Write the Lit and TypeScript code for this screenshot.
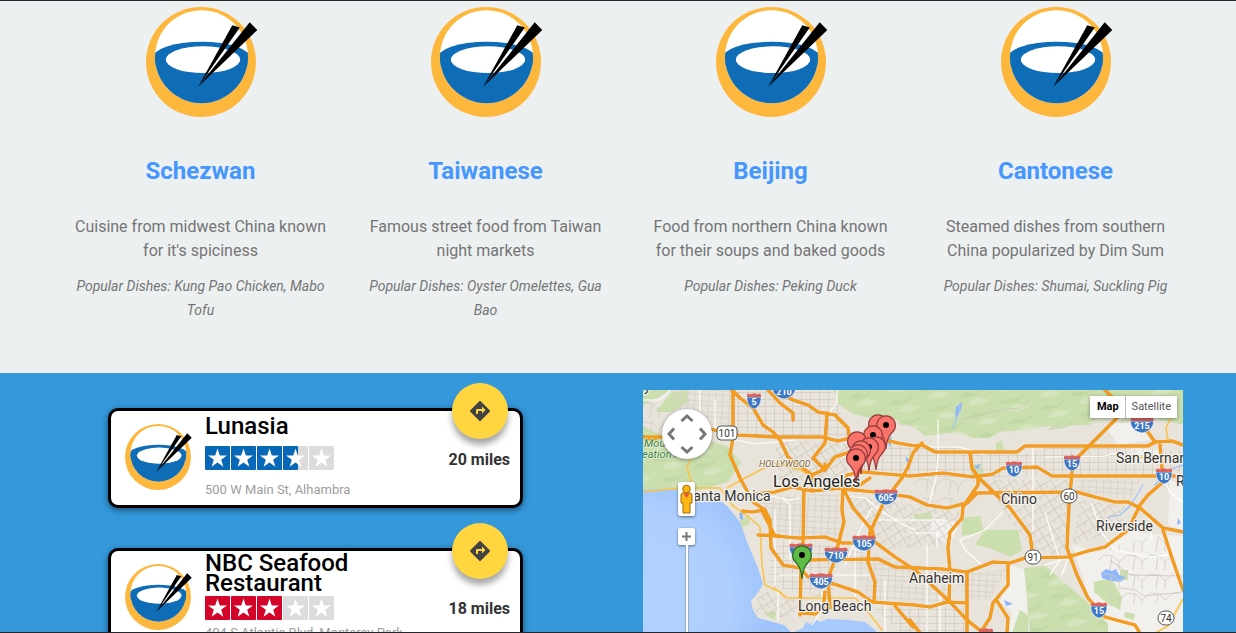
import { LitElement, html, svg, css } from "lit";
import { customElement, property } from "lit/decorators.js";

interface Cuisine {
  name: string;
  text: string;
  dishes: string;
}

interface Restaurant {
  name: string;
  rating: number;
  tone: "blue" | "red";
  address: string;
  miles: number;
}

const CUISINES: Cuisine[] = [
  { name: "Schezwan", text: "Cuisine from midwest China known for it's spiciness", dishes: "Kung Pao Chicken, Mabo Tofu" },
  { name: "Taiwanese", text: "Famous street food from Taiwan night markets", dishes: "Oyster Omelettes, Gua Bao" },
  { name: "Beijing", text: "Food from northern China known for their soups and baked goods", dishes: "Peking Duck" },
  { name: "Cantonese", text: "Steamed dishes from southern China popularized by Dim Sum", dishes: "Shumai, Suckling Pig" },
];

const RESTAURANTS: Restaurant[] = [
  { name: "Lunasia", rating: 3.5, tone: "blue", address: "500 W Main St, Alhambra", miles: 20 },
  { name: "NBC Seafood Restaurant", rating: 3, tone: "red", address: "404 S Atlantic Blvd, Monterey Park", miles: 18 },
];

@customElement("bowl-logo")
export class BowlLogo extends LitElement {
  static styles = css`
    :host { display: block; }
    svg { display: block; width: 100%; height: 100%; overflow: visible; }
  `;
  render() {
    return html`<svg viewBox="0 0 110 110" aria-hidden="true">
      <defs><clipPath id="inner"><circle cx="55.5" cy="49.7" r="46.5" /></clipPath></defs>
      <circle cx="55" cy="55" r="55" fill="#fdb73c" />
      <circle cx="55.5" cy="49.7" r="46.5" fill="#fff" />
      <g clip-path="url(#inner)" fill="#0f6cb6">
        <ellipse cx="55.5" cy="52" rx="50" ry="17.3" />
        <rect x="0" y="51" width="110" height="60" />
      </g>
      <ellipse cx="57" cy="52.7" rx="37.2" ry="13.4" fill="#fff" />
      <path d="M52 80 86.3 18.3 93.8 20.5Z" />
      <path d="M52 80 103.7 15.3 111.3 23Z" />
    </svg>`;
  }
}

@customElement("star-rating")
export class StarRating extends LitElement {
  @property({ type: Number }) value = 0;
  @property() tone = "blue";
  static styles = css`
    :host { display: flex; gap: 1px; }
    svg { display: block; width: 25px; height: 24px; }
    .off { fill: #dcdcdc; }
    .blue { fill: #0868b8; }
    .red { fill: #d30329; }
    .star { fill: #fff; }
  `;
  render() {
    return [0, 1, 2, 3, 4].map((i) => {
      const part = Math.max(0, Math.min(1, this.value - i));
      const width = part === 1 ? 25 : part > 0 ? 15 : 0;
      return html`<svg viewBox="0 0 25 24" aria-hidden="true">
        <rect class="off" width="25" height="24" rx="1" />
        <rect class=${this.tone} width=${width} height="24" rx="1" />
        <path class="star" d="M12.5 2.5 14.8 9.4H22L16.2 13.7 18.4 20.8 12.5 16.5 6.6 20.8 8.8 13.7 3 9.4H10.2Z" />
      </svg>`;
    });
  }
}

@customElement("restaurant-card")
export class RestaurantCard extends LitElement {
  @property({ attribute: false }) place!: Restaurant;
  static styles = css`
    :host { display: block; }
    .card {
      position: relative;
      display: flex;
      gap: 14px;
      height: 100px;
      box-sizing: border-box;
      padding: 0 10px 0 14px;
      border: 3px solid #000;
      border-radius: 10px;
      background: #fff;
      box-shadow: 0 2px 6px rgba(0, 0, 0, 0.5);
    }
    .logo { flex: none; width: 66px; height: 66px; margin-top: 13px; }
    .info { flex: 1; display: flex; flex-direction: column; justify-content: space-around; }
    .name { margin: 0; max-width: 200px; font-size: 24px; font-weight: 500; line-height: 20px; color: #000; }
    .row { display: flex; justify-content: space-between; align-items: center; height: 24px; }
    .miles { padding-top: 3px; font-size: 16px; font-weight: 700; line-height: 24px; color: #333; }
    .address { margin: 0; font-size: 13px; line-height: 20px; color: #9e9e9e; }
    .go {
      position: absolute;
      top: -28px;
      right: 12px;
      width: 56px;
      height: 56px;
      display: grid;
      place-items: center;
      padding: 0;
      border: 0;
      border-radius: 50%;
      background: #ffd640;
      box-shadow: 0 6px 6px rgba(0, 0, 0, 0.35);
      cursor: pointer;
    }
    .go svg { width: 24px; height: 24px; fill: #424242; }
  `;
  render() {
    const p = this.place;
    return html`<article class="card">
      <bowl-logo class="logo"></bowl-logo>
      <div class="info">
        <h3 class="name">${p.name}</h3>
        <div class="row">
          <star-rating .value=${p.rating} .tone=${p.tone} role="img" aria-label="${p.rating} out of 5"></star-rating>
          <span class="miles">${p.miles} miles</span>
        </div>
        <p class="address">${p.address}</p>
      </div>
      <button class="go" aria-label="Directions">
        <svg viewBox="0 0 24 24"><path d="M21.71 11.29l-9-9c-.39-.39-1.02-.39-1.41 0l-9 9c-.39.39-.39 1.02 0 1.41l9 9c.39.39 1.02.39 1.41 0l9-9c.39-.38.39-1.01 0-1.41zM14 14.5V12h-4v3H8v-4c0-.55.45-1 1-1h5V7.5l3.5 3.5-3.5 3.5z" /></svg>
      </button>
    </article>`;
  }
}

const FREEWAYS = [
  "643,437 663,437 710,429 737,435 775,437 822,437 838,441 850,438",
  "732,390 740,398 753,408 763,425 773,432 780,440 788,457 800,466 812,475 812,491",
  "768,390 780,403 793,413 793,420",
  "733,390 733,438 730,455 740,478 753,502 765,510 770,520 771,548 783,565 800,568 808,577 837,585 858,592 872,602 915,605 930,607 947,602 967,603",
  "786,396 793,400 808,405 818,412 835,415 848,428 850,442 885,440 898,443 915,446 922,445 935,452 1017,452 1025,446 1148,446 1155,442 1172,441 1183,445",
  "827,413 825,443 813,458 825,470 835,457 850,452",
  "753,494 775,492 792,487 812,491 842,488 847,475 862,472 875,473 910,476 943,473 973,477 993,474 1003,468 1037,467 1052,476 1183,476",
  "804,487 803,545 801,572 800,615",
  "812,475 825,469 825,464",
  "843,488 842,510 844,522 838,545 833,565 828,578 830,608",
  "763,513 775,536 798,538 825,537 842,543 870,543",
  "805,560 878,559 895,567 943,569 967,572 993,562 1010,563 1025,558 1068,557 1088,551 1105,547 1128,530 1140,505 1148,495 1163,482 1160,445",
  "843,488 853,508 872,530 875,542 895,557 915,570 923,577 950,602 967,620 982,632",
  "922,443 913,453 908,467 902,478 885,500 870,532 868,562 875,582 874,602",
  "842,489 875,492 910,497 927,505 947,508 967,503 977,493 1077,492 1095,497 1115,502 1128,502 1140,508 1163,528 1183,532",
  "970,453 972,468 978,477 978,485 963,507 962,518 950,532 948,548 950,572 949,602",
  "978,477 1010,508 1030,535 1033,557",
  "967,572 967,633",
  "1008,565 1008,585 993,603 990,618 980,633",
  "997,601 1008,618 1007,633",
  "1100,385 1112,397 1118,417 1078,457 1072,472 1069,505 1067,548 1077,575 1088,598 1105,617 1135,625 1140,633",
  "1138,418 1155,442",
  "1163,530 1172,558 1183,590",
  "895,606 913,627",
  "801,613 815,614 823,608 825,592",
  "643,437 655,440",
  "910,620 920,633",
  "842,489 857,487 870,478",
  "743,511 752,512 765,510",
  "758,535 780,536",
];

const YELLOW = [
  "720,488 732,505 750,518 760,527 762,565 765,585 780,592 787,598 855,598 865,608 882,630",
  "727,488 745,478 768,466",
  "692,457 687,467 693,488 720,488",
  "643,492 680,488 693,488",
  "1125,458 1163,457",
  "1168,400 1172,415 1166,428 1168,441",
  "1155,633 1168,626 1183,599",
  "775,463 800,470 812,476",
  "775,588 785,597",
];

const WHITE = [
  "837,390 837,402 830,412",
  "938,420 938,455 936,478 928,508",
  "910,447 960,447 985,455",
  "1033,448 1033,530",
  "1003,512 985,530 960,540 965,550 982,565",
  "1045,457 1105,456 1120,452",
  "1092,503 1100,530 1115,550 1150,557 1175,554",
  "1140,508 1150,520 1152,540",
  "1165,482 1170,492 1183,503",
  "700,390 700,425",
  "715,400 715,430",
  "845,496 865,498 880,510 900,523 915,530",
  "822,592 822,610 812,625",
  "855,540 855,600",
  "872,508 860,530 852,548 845,565",
  "775,510 775,585",
  "783,498 790,505 790,560",
  "910,533 937,533 937,548",
  "927,545 927,633",
  "940,590 940,633",
  "780,575 870,575",
  "875,520 945,520",
  "643,400 660,400 670,390",
  "737,440 755,444 795,440",
  "1045,513 1060,560 1050,575",
  "778,590 778,620",
  "885,580 885,633",
  "740,490 790,500 800,498",
  "1045,565 1068,558 1062,575",
];

const GRIDS: [string, string][] = [
  ["g1", "730,390 830,390 850,430 850,438 730,436"],
  ["g2", "672,390 731,390 731,428 700,415 672,408"],
  ["g1", "850,442 935,446 1020,455 1045,448 1045,475 970,478 850,474"],
  ["g3", "775,440 850,444 845,488 780,488"],
  ["g2", "755,496 842,494 842,540 773,534"],
  ["g1", "773,540 840,545 833,600 768,585"],
  ["g3", "846,495 960,512 948,545 880,550"],
  ["g2", "842,548 948,572 946,602 870,600"],
  ["g1", "872,606 965,606 965,633 900,633"],
  ["g3", "980,480 1068,480 1068,555 1035,552"],
  ["g1", "1045,448 1110,448 1180,450 1180,474 1045,474"],
  ["g2", "1076,480 1140,480 1130,500 1076,490"],
  ["g3", "1080,500 1125,506 1120,530 1072,545"],
  ["g2", "950,575 1005,570 990,600 968,600"],
  ["g3", "758,590 800,600 790,620 756,612"],
  ["g4", "643,400 700,420 700,440 643,432"],
  ["g4", "1095,550 1165,535 1180,600 1110,606"],
  ["g4", "910,478 975,480 960,505 925,502"],
];

const shield = (x: number, y: number, label: string) => {
  const w = label.length > 2 ? 11.5 : label.length > 1 ? 8 : 7;
  return svg`<g transform="translate(${x} ${y})">
    <path fill="#3c76c4" stroke="#fff" stroke-width="0.6" d="M${-w} -4H${w}C${w + 0.5} 2 ${w * 0.6} 7 0 8C${-w * 0.6} 7 ${-w - 0.5} 2 ${-w} -4Z" />
    <path fill="#dd625c" d="M${-w} -4V-6.500L${-w + 2} -7.500 ${-w / 2} -6.800 0 -7.800 ${w / 2} -6.800 ${w - 2} -7.500 ${w} -6.500V-4Z" />
    <text class="shield" y="4">${label}</text>
  </g>`;
};

const badge = (x: number, y: number, label: string) => {
  const w = label.length > 2 ? 10 : 8;
  return svg`<g transform="translate(${x} ${y})">
    <rect x=${-w} y="-7" width=${w * 2} height="14" rx=${label.length > 2 ? 4 : 7} fill="#fff" stroke="#555" />
    <text class="badge" y="4">${label}</text>
  </g>`;
};

const pin = (x: number, y: number, green = false, dot = true) => svg`<g transform="translate(${x} ${y})">
    <path fill=${green ? "#5dbb46" : "#fb746c"} stroke=${green ? "#2f6b26" : "#963b3b"} stroke-width="1.2"
      d="M0 24C-1 14 -3 11 -6 7.5A9.4 9.4 0 1 1 6 7.5C3 11 1 14 0 24Z" />
    ${dot ? svg`<circle r="3" />` : ""}
  </g>`;

const label = (x: number, y: number, text: string, cls = "city") => svg`<text class=${cls} x=${x} y=${y}>${text}</text>`;

const line = (points: string, cls: string) => svg`<polyline class=${cls} points=${points} />`;

@customElement("area-map")
export class AreaMap extends LitElement {
  static styles = css`
    :host { display: block; position: relative; overflow: hidden; font-family: Roboto, sans-serif; }
    .canvas { display: block; width: 100%; height: auto; }
    polyline { fill: none; stroke-linejoin: round; stroke-linecap: round; }
    .edge { stroke: #e58f1c; stroke-width: 3.2; }
    .free { stroke: #f69d1d; stroke-width: 2.4; }
    .main { stroke: #fac448; stroke-width: 1.6; }
    .local { stroke: #fff; stroke-width: 1.2; }
    .lane { stroke: #cbc5b9; stroke-width: 0.8; }
    .stream { stroke: #9cc0f9; stroke-width: 1.2; }
    text { paint-order: stroke; stroke-linejoin: round; }
    .city { font-size: 14px; fill: #333; stroke: #f5f2ec; stroke-width: 2.5px; }
    .big { font-size: 16px; fill: #222; stroke: #f5f2ec; stroke-width: 2.5px; }
    .area { font-size: 9px; font-style: italic; fill: #7d6534; stroke: #f5f2ec; stroke-width: 2px; }
    .park { font-size: 11px; font-style: italic; fill: #3e8246; stroke: #e8f0da; stroke-width: 1.5px; }
    .shield { font-size: 9px; font-weight: 700; fill: #fff; text-anchor: middle; }
    .badge { font-size: 10px; fill: #333; text-anchor: middle; }
    .pan {
      position: absolute;
      top: 19px;
      left: 19px;
      width: 50px;
      height: 50px;
      display: grid;
      grid-template-areas: ". n ." "w . e" ". s .";
      grid-template-columns: 18px 14px 18px;
      grid-template-rows: 18px 14px 18px;
      border-radius: 50%;
      background: #fff;
      box-shadow: 0 1px 4px rgba(0, 0, 0, 0.4);
    }
    .arrow { display: grid; place-items: center; padding: 0; border: 0; background: none; }
    .arrow svg { width: 14px; height: 14px; fill: none; stroke: #777; stroke-width: 3; }
    .n { grid-area: n; }
    .s { grid-area: s; }
    .e { grid-area: e; }
    .w { grid-area: w; }
    .s svg { transform: rotate(180deg); }
    .e svg { transform: rotate(90deg); }
    .w svg { transform: rotate(270deg); }
    .tools { position: absolute; top: 92px; bottom: 0; left: 35px; display: flex; flex-direction: column; align-items: center; }
    .tool {
      display: grid;
      place-items: center;
      width: 17px;
      height: 17px;
      padding: 0;
      border: 0;
      border-radius: 2px;
      background: #fff;
      box-shadow: 0 1px 3px rgba(0, 0, 0, 0.5);
    }
    .man { height: 34px; margin-bottom: 12px; }
    .track { flex: 1; width: 2px; border: solid #9aaccb; border-width: 0 1px; background: #fff; }
    .types { position: absolute; top: 6px; right: 6px; display: flex; box-shadow: 0 1px 4px rgba(0, 0, 0, 0.4); }
    .type {
      height: 22px;
      padding: 0 6px;
      border: 0;
      border-left: 1px solid #bbb;
      background: #fff;
      font: 11px/22px Roboto, sans-serif;
      color: #555;
    }
    .on { border-left-color: #fff; font-weight: 700; color: #000; }
  `;

  private arrow(side: string, name: string) {
    return html`<button class="arrow ${side}" aria-label=${name}>
      <svg viewBox="0 0 14 14"><path d="M1.500 10 7 5 12.500 10" /></svg>
    </button>`;
  }

  render() {
    return html`
      <svg class="canvas" viewBox="643 390 540 243" role="img" aria-label="Map of restaurants around Los Angeles">
        <defs>
          <pattern id="g1" width="9" height="7" patternUnits="userSpaceOnUse"><path d="M0 .5H9M.5 0V7" stroke="#d3cdc2" stroke-width=".8" /></pattern>
          <pattern id="g2" width="7" height="11" patternUnits="userSpaceOnUse" patternTransform="rotate(3)"><path d="M0 .5H7M.5 0V11M0 5H7" stroke="#d4cec3" stroke-width=".7" /></pattern>
          <pattern id="g3" width="12" height="9" patternUnits="userSpaceOnUse" patternTransform="rotate(-32)"><path d="M0 .5H12M.5 0V9M6 0V5" stroke="#d0cabe" stroke-width=".8" /></pattern>
          <pattern id="g4" width="23" height="19" patternUnits="userSpaceOnUse"><path d="M0 4 9 5 15 11 23 4M8 5 6 19M15 11V19" fill="none" stroke="#d0cbc0" stroke-width=".8" /></pattern>
          <pattern id="hill" width="34" height="22" patternUnits="userSpaceOnUse" patternTransform="rotate(-24)">
            <path d="M0 5Q8 1 14 6T30 3L24 9Q12 12 0 5Z" fill="#b9d39a" opacity=".55" />
            <path d="M6 15Q16 10 22 16T34 14L26 20Q14 21 6 15Z" fill="#dbe9c6" opacity=".7" />
          </pattern>
          <radialGradient id="sea" gradientUnits="userSpaceOnUse" cx="643" cy="600" r="125"><stop offset="0" stop-color="#b2d1ff" /><stop offset=".7" stop-color="#aecfff" /><stop offset="1" stop-color="#9fc4fc" /></radialGradient>
        </defs>
        <rect x="643" y="390" width="540" height="243" fill="#e8e3db" />
        <g fill="#f2f0ed">
          <path d="M1072 545 1100 552 1130 532 1183 536V633H1108L1090 600Z" />
          <path d="M1010 565 1026 570 1028 633H1008L1012 612 1000 602Z" />
          <path d="M930 518 960 522 950 545 932 535ZM1105 425 1135 420 1150 440 1118 445ZM1170 480 1183 485V530L1168 525ZM1130 448 1160 450 1155 465 1135 460Z" />
        </g>
        <g fill="#cbdfae">
          <path d="M643 405 672 390H643ZM643 426 672 440 700 438 727 446 741 462 728 482 700 490 643 492Z" />
          <path d="M672 392 686 390 690 402 672 412 655 412Z" />
          <path d="M834 390 838 404 855 415 885 416 915 428 925 436 960 432 972 438 990 438 996 432 1020 430 1050 426 1090 425 1100 416 1120 419 1140 410 1160 420 1183 424V390Z" />
          <path d="M1045 566 1066 584 1092 606 1108 624V633H1030L1027 598 1024 568Z" />
          <path d="M1094 582 1112 578 1122 598 1120 610 1108 604 1094 592Z" />
          <path d="M962 518 980 516 984 532 962 536ZM985 530 1018 530 1022 550 1010 557 990 548 975 545ZM1120 570 1128 570V580H1120ZM970 465 982 464 984 475 972 476ZM996 443 1002 440 1004 450 996 450Z" />
          <path d="M740 520 748 516 750 524 742 528ZM765 612 776 611 775 620 767 616ZM913 515 930 512 932 520 915 520ZM1020 610 1028 615V633H1012ZM1125 612 1135 614 1134 620 1124 617Z" />
        </g>
        <g fill="url(#hill)">
          <path d="M643 430 700 438 727 446 740 462 728 482 643 490Z" />
          <path d="M834 390 855 415 915 428 990 438 1090 425 1183 424V390Z" />
          <path d="M1045 566 1066 584 1108 624V633H1030L1027 598 1024 568Z" />
        </g>
        <path fill="url(#sea)" d="M643 490 665 489 690 491 717 498 728 507 740 522 747 542 758 568 763 584 757 594 751 601 753 610 758 618 773 622 784 625 792 633H643Z" />
        <path fill="#a6c9fe" d="M792 633 803 628 806 622 811 624 815 619 820 622 828 619 848 620 865 622 875 630 877 633Z" />
        <g fill="#8fb6fb">
          <path d="M1101 573 1106 569 1112 571 1116 569 1119 575 1126 577 1120 582 1108 580 1102 578Z" />
          <path d="M956 407 962 402 961 410 955 418ZM974 466 980 464 978 470ZM1004 600 1013 604 1006 606ZM905 456 910 460 908 465ZM739 513 743 512 743 520 740 519ZM1178 518 1181 523 1177 525ZM887 440 892 436 890 448Z" />
        </g>
        ${GRIDS.map(([id, pts]) => svg`<polygon points=${pts} fill="url(#${id})" />`)}
        ${line("960,420 975,416 1000,410 1020,408 1030,400", "lane")}
        ${line("1120,588 1135,590 1145,596 1183,592", "lane")}
        ${line("1110,560 1130,575 1183,576", "lane")}
        ${line("1130,506 1120,515 1108,517", "stream")}
        ${line("1143,485 1134,500 1126,510", "stream")}
        ${line("1183,465 1168,470 1155,485", "stream")}
        ${line("960,404 958,415 953,428", "stream")}
        ${WHITE.map((p) => line(p, "local"))}
        ${YELLOW.map((p) => line(p, "main"))}
        ${FREEWAYS.map((p) => line(p, "edge"))}
        ${FREEWAYS.map((p) => line(p, "free"))}
        ${label(644, 391, "y")}
        ${label(644, 447, "Mou", "park")}
        ${label(642, 458, "eation A", "park")}
        ${label(759, 467, "HOLLYWOOD", "area")}
        ${label(773, 487, "Los Angeles", "big")}
        ${label(685, 501, "Santa Monica")}
        ${label(1001, 504, "Chino")}
        ${label(1116, 463, "San Bernardino")}
        ${label(1176, 486, "Redlands")}
        ${label(1096, 531, "Riverside")}
        ${label(909, 583, "Anaheim")}
        ${label(798, 611, "Long Beach")}
        ${shield(754, 401, "5")}
        ${shield(784, 391, "210")}
        ${shield(886, 497, "605")}
        ${shield(864, 543, "105")}
        ${shield(836, 555, "710")}
        ${shield(801, 551, "110")}
        ${shield(821, 581, "405")}
        ${shield(1014, 469, "10")}
        ${shield(1072, 463, "15")}
        ${shield(1164, 476, "10")}
        ${shield(1142, 425, "215")}
        ${shield(1099, 610, "15")}
        ${shield(986, 636, "5")}
        ${badge(727, 433, "101")}
        ${badge(1069, 496, "60")}
        ${badge(1033, 557, "91")}
        ${badge(1166, 618, "74")}
        ${pin(878, 424, false, false)}
        ${pin(886, 425)}
        ${pin(873, 435)}
        ${pin(857, 441, false, false)}
        ${pin(876, 446, false, false)}
        ${pin(869, 447)}
        ${pin(861, 450, false, false)}
        ${pin(858, 454, false, false)}
        ${pin(856, 458)}
        ${pin(802, 555, true)}
      </svg>
      <div class="pan">
        ${this.arrow("n", "Pan up")} ${this.arrow("w", "Pan left")} ${this.arrow("e", "Pan right")} ${this.arrow("s", "Pan down")}
      </div>
      <div class="tools">
        <button class="tool man" aria-label="Street View">
          <svg width="13" height="30" viewBox="0 0 13 30">
            <path d="M1 11Q1 9 3 9H10Q12 9 12 11V19H10V29H3V19H1Z" fill="#fdb813" stroke="#a8680a" />
            <path d="M3.500 9.500H9.500L6.500 14Z" fill="#e9533d" />
            <circle cx="6.500" cy="5" r="3.800" fill="#fdb813" stroke="#a8680a" />
          </svg>
        </button>
        <button class="tool" aria-label="Zoom in">
          <svg width="9" height="9" viewBox="0 0 9 9"><path d="M0 4.500H9M4.500 0V9" stroke="#777" stroke-width="2" /></svg>
        </button>
        <div class="track"></div>
      </div>
      <div class="types">
        <button class="type on">Map</button>
        <button class="type">Satellite</button>
      </div>
    `;
  }
}

@customElement("app-root")
export class AppRoot extends LitElement {
  static styles = css`
    :host {
      display: flex;
      flex-direction: column;
      height: 100vh;
      box-sizing: border-box;
      overflow: hidden;
      border: solid #25252b;
      border-width: 1px 0;
      background: #3498db;
      font-family: Roboto, sans-serif;
    }
    .cuisines {
      flex: none;
      display: grid;
      grid-template-columns: repeat(4, 1fr);
      padding: 6px 38px 51px 58px;
      background: #ecf0f1;
      text-align: center;
      color: #757575;
    }
    .cuisine { padding: 0 15px; }
    .logo { width: 110px; height: 110px; margin: 0 auto 38px; }
    .title { margin: 0 0 28px; font-size: 24px; font-weight: 700; line-height: 32px; color: #4597ff; }
    .text { margin: 0 0 11px; font-size: 16px; line-height: 24px; }
    .dishes { margin: 0; font-size: 14px; font-style: italic; line-height: 24px; }
    .places {
      flex: none;
      display: grid;
      grid-template-columns: 1fr 1fr;
      align-items: start;
      gap: 50px;
      padding: 17px 53px 0;
    }
    .list { display: grid; gap: 40px; padding: 18px 70px 40px 55px; }
  `;

  render() {
    return html`
      <section class="cuisines">
        ${CUISINES.map((c) => html`<div class="cuisine">
          <bowl-logo class="logo"></bowl-logo>
          <h2 class="title">${c.name}</h2>
          <p class="text">${c.text}</p>
          <p class="dishes">Popular Dishes: ${c.dishes}</p>
        </div>`)}
      </section>
      <section class="places">
        <div class="list">
          ${RESTAURANTS.map((r) => html`<restaurant-card .place=${r}></restaurant-card>`)}
        </div>
        <area-map></area-map>
      </section>
    `;
  }
}
